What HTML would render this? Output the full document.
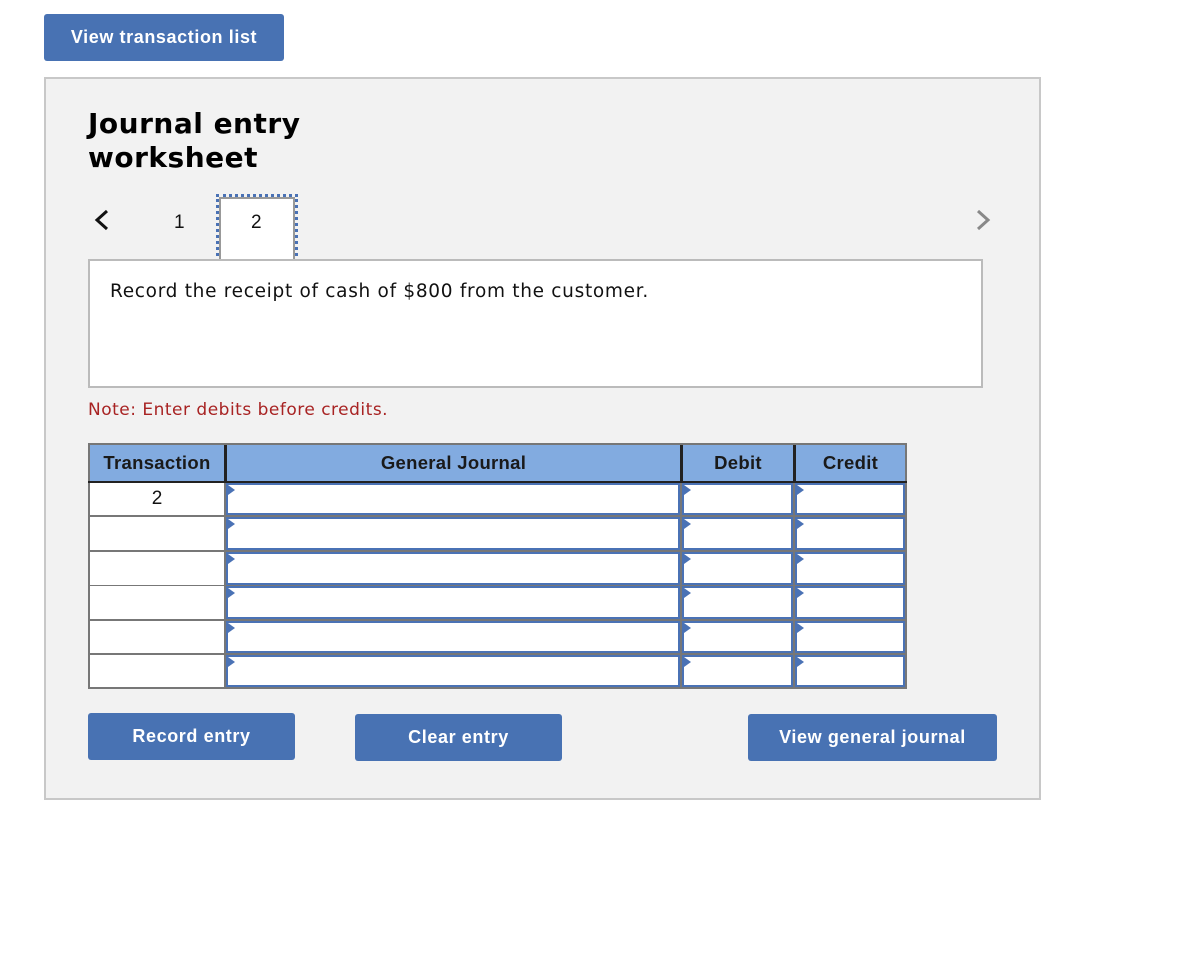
<!DOCTYPE html>
<html><head><meta charset="utf-8"><style>
*{box-sizing:border-box;margin:0;padding:0}
body{width:1198px;height:966px;background:#fff;font-family:"Liberation Sans",Arial,sans-serif;position:relative;overflow:hidden}
.btn{position:absolute;background:#4872b3;color:#fff;font-weight:bold;font-size:18px;letter-spacing:0.6px;border-radius:3px;display:flex;align-items:center;justify-content:center}
.panel{position:absolute;left:44px;top:77px;width:997px;height:723px;background:#f2f2f2;border:2px solid #c8c8c8}
.abs{position:absolute}
.v{font-family:"DejaVu Sans",Verdana,sans-serif}
.tbl{position:absolute;left:88px;top:443px;width:819px;height:246px;background:#777}
.cell{position:absolute;background:#fff}
.hd{position:absolute;background:#82abe0;font-weight:bold;font-size:18.5px;letter-spacing:0.3px;color:#1a1a1a;display:flex;align-items:center;justify-content:center}
.in{position:absolute;background:#fff;border:2px solid #4a72b5}
.in:before{content:"";position:absolute;left:0;top:0;border-left:7px solid #4a72b5;border-top:5px solid transparent;border-bottom:5px solid transparent}
</style></head><body>
<div class="btn" style="left:44px;top:14px;width:240px;height:47px">View transaction list</div>
<div class="panel"></div>
<div class="abs v" style="left:88px;top:107px;font-size:28px;font-weight:bold;line-height:34px;color:#000;letter-spacing:0.5px">Journal entry<br>worksheet</div>
<svg class="abs" style="left:92px;top:208px" width="20" height="26"><path d="M15 3 L5 12 L15 21" stroke="#111" stroke-width="3" fill="none"/></svg>
<div class="abs" style="left:174px;top:212px;font-size:19px;color:#111">1</div>
<div class="abs" style="left:216px;top:194px;width:82px;height:68px;border:3px dotted #4a72b5"></div>
<div class="abs" style="left:219px;top:197px;width:76px;height:62px;background:#fff;border:2px solid #999;border-bottom:none"></div>
<div class="abs" style="left:251px;top:212px;font-size:19px;color:#111">2</div>
<svg class="abs" style="left:974px;top:208px" width="20" height="26"><path d="M4 3 L14 12 L4 21" stroke="#888" stroke-width="3" fill="none"/></svg>
<div class="abs" style="left:88px;top:259px;width:895px;height:129px;background:#fff;border:2px solid #bbb"></div>
<div class="abs v" style="left:110px;top:281px;font-size:18.5px;letter-spacing:0.7px;color:#111;white-space:nowrap">Record the receipt of cash of $800 from the customer.</div>
<div class="abs v" style="left:88px;top:400px;font-size:17px;letter-spacing:0.5px;color:#a82323;white-space:nowrap">Note: Enter debits before credits.</div>
<div class="tbl">
<div class="hd" style="left:2px;top:2px;width:134px;height:36px">Transaction</div>
<div class="hd" style="left:139px;top:2px;width:453px;height:36px">General Journal</div>
<div class="hd" style="left:595px;top:2px;width:110px;height:36px">Debit</div>
<div class="hd" style="left:708px;top:2px;width:109px;height:36px">Credit</div>
<div class="abs" style="left:0;top:38px;width:819px;height:2px;background:#222"></div>
<div class="abs" style="left:136px;top:2px;width:3px;height:36px;background:#222"></div>
<div class="abs" style="left:592px;top:2px;width:3px;height:36px;background:#222"></div>
<div class="abs" style="left:705px;top:2px;width:3px;height:36px;background:#222"></div>
</div>
<div id="rows"></div>
<div class="btn" style="left:88px;top:713px;width:207px;height:47px">Record entry</div>
<div class="btn" style="left:355px;top:714px;width:207px;height:47px">Clear entry</div>
<div class="btn" style="left:748px;top:714px;width:249px;height:47px">View general journal</div>
<script>
var tops=[483,517,552,586,621,655],h=[32,33,33,33,32,32],s='';
for(var i=0;i<6;i++){var t=tops[i];
s+='<div class="cell" style="left:90px;top:'+t+'px;width:134px;height:'+h[i]+'px;text-align:center;font-size:19px;line-height:'+h[i]+'px;color:#111">'+(i==0?'2':'')+'</div>';
s+='<div class="in" style="left:226px;top:'+t+'px;width:454px;height:'+h[i]+'px"></div>';
s+='<div class="in" style="left:682px;top:'+t+'px;width:111px;height:'+h[i]+'px"></div>';
s+='<div class="in" style="left:795px;top:'+t+'px;width:110px;height:'+h[i]+'px"></div>';}
document.getElementById('rows').innerHTML=s;
</script>
</body></html>
